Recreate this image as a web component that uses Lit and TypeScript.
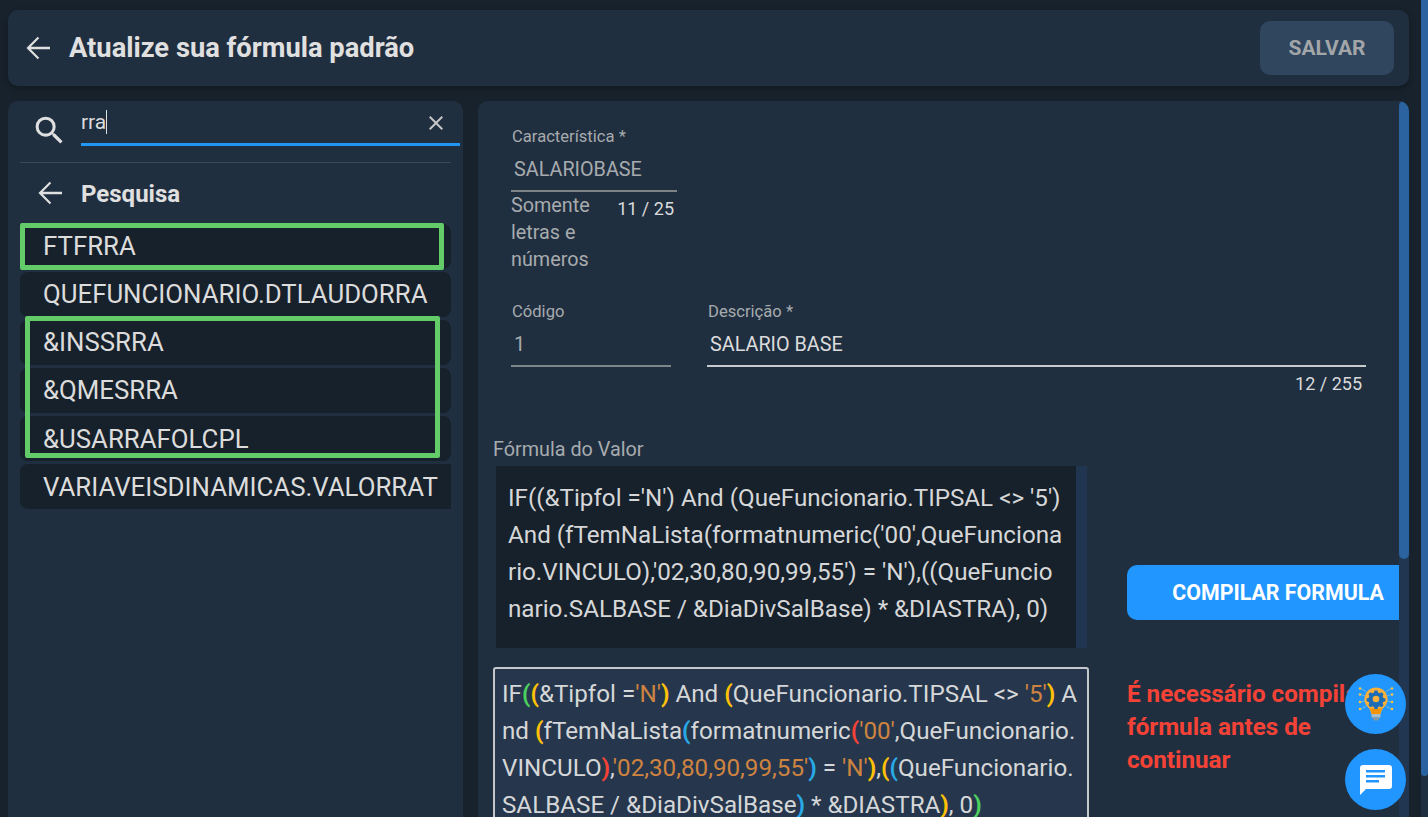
import { LitElement, html, css, svg } from "lit";
import { customElement } from "lit/decorators.js";

const arrow = html`<svg class="arrow" viewBox="0 0 24 24" width="36" height="36" fill="#e0e0e0"><path d="M20 11.100H7.200l5.600-5.600L11.800 4.500 4.300 12l7.500 7.500 1-1-5.600-5.600H20z"/></svg>`;

const bulb = svg`
  <g fill="none" stroke="#6fb7dc" stroke-width="1">
    <path d="M5 2.500l5 3M5 8.500l4 1.500M5 16l4-1M5 23l5-3M35 2.500l-5 3M35 8.500l-4 1.500M35 16l-4-1M35 23l-5-3"/>
  </g>
  <g fill="#f5c242">
    <circle cx="4" cy="2.500" r="1.300"/><circle cx="36" cy="2.500" r="1.300"/>
    <circle cx="4" cy="8.500" r="1.300"/><circle cx="36" cy="8.500" r="1.300"/>
    <circle cx="4" cy="16" r="1.300"/><circle cx="36" cy="16" r="1.300"/>
    <circle cx="4" cy="23" r="1.300"/><circle cx="36" cy="23" r="1.300"/>
  </g>
  <path d="M20 1.500a11.500 11.500 0 0 0-7.500 20.200c1.500 1.500 2.300 3.500 2.700 6.300h9.600c.4-2.800 1.200-4.800 2.700-6.300A11.500 11.500 0 0 0 20 1.500z" fill="#fbb03b"/>
  <path d="M13.500 22.500h13c-1.300 1.500-2 3.300-2.300 5.500h-8.400c-.3-2.200-1-4-2.300-5.500z" fill="#f59300"/>
  <path d="M18.500 4.500h3l.5 2 1.800.8 1.800-1 2 2-1 1.800.8 1.800 2 .5v2.800l-2 .5-.8 1.800 1 1.800-2 2-1.800-1-1.800.8-.5 2h-3l-.5-2-1.800-.8-1.800 1-2-2 1-1.800-.8-1.800-2-.5v-2.800l2-.5.8-1.800-1-1.800 2-2 1.800 1 1.800-.8z" fill="#1c6db5"/>
  <circle cx="20" cy="13" r="3.300" fill="#fbb03b"/>
  <rect x="15.500" y="28" width="9" height="3.500" fill="#a9bcc8"/>
  <path d="M16.500 31.500h7l-1 3h-5z" fill="#7f99ab"/>
`;

@customElement("app-root")
export class AppRoot extends LitElement {
  static styles = css`
    :host {
      display: block;
      width: 1428px;
      height: 817px;
      overflow: hidden;
      position: relative;
      background: #18222c;
      font-family: Roboto, "Liberation Sans", sans-serif;
      color: #e0e0e0;
    }
    .arrow { flex: none; }
    .page {
      width: 1409px;
      padding: 10px 0 0 8px;
      box-sizing: border-box;
      display: flex;
      flex-direction: column;
      gap: 15px;
    }
    .head {
      height: 76px;
      width: 1401px;
      box-sizing: border-box;
      background: #202f40;
      border-radius: 10px;
      box-shadow: 0 3px 6px rgba(0, 0, 0, 0.25);
      display: flex;
      align-items: center;
      padding: 0 15px 0 12px;
    }
    .head h1 {
      font-size: 27.3px;
      font-weight: 700;
      margin: 0 0 0 13px;
      flex: 1;
      line-height: 30px;
    }
    .save {
      width: 134px;
      height: 54px;
      border-radius: 10px;
      background: #30465f;
      color: #a3a6a9;
      font-size: 21px;
      font-weight: 700;
      display: flex;
      align-items: center;
      justify-content: center;
    }
    .cols {
      display: flex;
      gap: 15px;
      height: 716px;
    }
    .left {
      width: 455px;
      background: #202f40;
      border-radius: 10px 10px 0 0;
      position: relative;
      box-sizing: border-box;
      padding: 0 12px;
    }
    .search {
      display: flex;
      height: 61px;
      align-items: flex-start;
      border-bottom: 1px solid #3c4956;
    }
    .search .ic { margin: 11px 0 0 11px; width: 37px; height: 37px; flex: none; }
    .field {
      margin-left: 13px;
      width: 379px;
      height: 45px;
      flex: none;
      border-bottom: 3px solid #2196f3;
      box-sizing: border-box;
      position: relative;
      font-size: 21px;
      display: flex;
      align-items: flex-start;
      padding-top: 9px;
      line-height: 24px;
      justify-content: space-between;
    }
    .caret { border-right: 1px solid #e0e0e0; height: 24px; color: #dcdcdc; }
    .x { margin: 1px 12px 0 0; width: 24px; height: 24px; flex: none; }
    .back {
      display: flex;
      align-items: center;
      height: 60px;
      font-size: 24px;
      font-weight: 700;
      gap: 13px;
      padding-left: 12px;
    }
    .back span { margin-top: 2px; }
    .items {
      display: flex;
      flex-direction: column;
      gap: 3px;
      margin-top: 1px;
    }
    .item {
      height: 45px;
      background: #17212b;
      border-radius: 8px;
      padding-left: 23px;
      font-size: 25.8px;
      line-height: 44px;
      white-space: nowrap;
      overflow: hidden;
      color: #dcdcdc;
    }
    .item.low { line-height: 46px; }
    .item.last { border-radius: 8px 0 0 8px; }
    .mark {
      position: absolute;
      border: 5px solid #63cb68;
      border-radius: 2px;
      box-sizing: border-box;
    }
    .mark.one { left: 12px; top: 122px; width: 424px; height: 47px; }
    .mark.many { left: 17px; top: 215px; width: 415px; height: 142px; }
    .right {
      width: 932px;
      background: #202f40;
      border-radius: 10px 10px 0 0;
      position: relative;
      overflow: hidden;
      box-sizing: border-box;
      padding: 27px 0 0 15px;
    }
    .lab { font-size: 16.6px; line-height: 18px; color: #a7abae; }
    .top { width: 166px; margin-left: 18px; }
    .top .lab { margin-left: 1px; }
    .val { font-size: 19.8px; line-height: 22px; padding-left: 3px; color: #a7abae; margin-top: 13px; height: 33px; box-sizing: border-box; }
    .under { border-bottom: 2px solid #7e8388; }
    .hintrow { display: flex; justify-content: space-between; }
    .hint { font-size: 19.8px; line-height: 27px; color: #a7abae; width: 90px; }
    .count { font-size: 18px; line-height: 18px; color: #d9dadb; margin: 8px 3px 0 0; white-space: nowrap; }
    .row2 { display: flex; margin: 30px 0 0 18px; gap: 36px; }
    .cod { width: 160px; }
    .cod .lab, .desc .lab { margin-left: 1px; }
    .desc { width: 659px; }
    .desc .val { color: #dcdcdc; }
    .desc .under { border-bottom-color: #c9cacc; }
    .c2 { text-align: right; font-size: 18px; line-height: 18px; color: #d9dadb; margin: 8px 4px 0 0; }
    .flabel { font-size: 19.8px; line-height: 22px; color: #a7abae; margin-top: 46px; }
    .fgrid { display: grid; grid-template-columns: 596px 272px; column-gap: 38px; margin-top: 5px; }
    .dark {
      margin-left: 3px;
      width: 591px;
      height: 182px;
      background: #17212b;
      display: flex;
      box-sizing: border-box;
    }
    .dark .txt {
      flex: 1;
      padding: 14px 12px 0 12px;
      font-size: 24.2px;
      line-height: 37px;
      word-break: break-all;
      color: #d6d7d8;
    }
    .dark .sb { width: 11px; background: #1f3550; flex: none; }
    .btnwrap { display: flex; align-items: center; height: 182px; }
    .btn {
      width: 272px;
      height: 55px;
      margin-top: 70px;
      box-sizing: border-box;
      background: #2196ff;
      color: #fff;
      font-size: 21.4px;
      font-weight: 700;
      border-radius: 10px 0 0 10px;
      display: flex;
      align-items: center;
      justify-content: flex-end;
      padding-right: 15px;
      white-space: nowrap;
    }
    .edit {
      margin-top: 19px;
      width: 596px;
      height: 200px;
      box-sizing: border-box;
      border: 2px solid #c5c8cb;
      border-radius: 3px;
      background: #26374d;
      padding: 7px 7px;
      font-size: 24.2px;
      line-height: 37px;
      word-break: break-all;
      color: #d6d7d8;
    }
    .y { color: #ffc107; font-weight: 700; }
    .g { color: #4ccf5f; font-weight: 700; }
    .b { color: #29a9e6; font-weight: 700; }
    .r { color: #f44336; font-weight: 700; }
    .s { color: #ce8340; }
    .err {
      margin-top: 30px;
      font-size: 24.2px;
      font-weight: 700;
      line-height: 33px;
      color: #f44336;
      width: 272px;
      max-height: 100px;
    }
    .sbi {
      position: absolute;
      right: 0;
      top: 0;
      width: 10px;
      height: 100%;
      background: #213650;
    }
    .sbi i { display: block; height: 458px; background: #2a639f; border-radius: 5px; }
    .sbo { position: absolute; left: 1421px; top: 0; width: 7px; height: 817px; background: #202f40; }
    .sbo i { display: block; height: 776px; background: #2a639f; border-radius: 0 0 4px 4px; }
    .fab {
      position: absolute;
      left: 1345px;
      width: 61px;
      height: 60px;
      border-radius: 50%;
      background: #2196ff;
      display: flex;
      align-items: center;
      justify-content: center;
    }
    .fab.one { top: 674px; }
    .fab.two { top: 749px; height: 61px; }
  `;

  render() {
    const rows = ["FTFRRA", "QUEFUNCIONARIO.DTLAUDORRA", "&INSSRRA", "&QMESRRA"];
    return html`
      <div class="page">
        <div class="head">
          ${arrow}
          <h1>Atualize sua fórmula padrão</h1>
          <div class="save">SALVAR</div>
        </div>
        <div class="cols">
          <div class="left">
            <div class="search">
              <svg class="ic" viewBox="0 0 24 24" fill="#e0e0e0"><path d="M15.500 14h-.79l-.28-.27A6.471 6.471 0 0 0 16 9.500 6.500 6.500 0 1 0 9.500 16c1.610 0 3.090-.59 4.230-1.570l.27.28v.79l5 4.990L20.490 19l-4.990-5zm-6 0C7.010 14 5 11.990 5 9.500S7.010 5 9.500 5 14 7.010 14 9.500 11.990 14 9.500 14z"/></svg>
              <div class="field">
                <span class="caret">rra</span>
                <svg class="x" viewBox="0 0 24 24" fill="#c4c6c8"><path d="M19 6.410L17.590 5 12 10.590 6.410 5 5 6.410 10.590 12 5 17.590 6.410 19 12 13.410 17.590 19 19 17.590 13.410 12z"/></svg>
              </div>
            </div>
            <div class="back">${arrow}<span>Pesquisa</span></div>
            <div class="items">
              ${rows.map((r) => html`<div class="item">${r}</div>`)}
              <div class="item low">&amp;USARRAFOLCPL</div>
              <div class="item last low">VARIAVEISDINAMICAS.VALORRAT</div>
            </div>
            <div class="mark one"></div>
            <div class="mark many"></div>
          </div>
          <div class="right">
            <div class="top">
              <div class="lab">Característica *</div>
              <div class="val under">SALARIOBASE</div>
              <div class="hintrow">
                <div class="hint">Somente letras e números</div>
                <div class="count">11 / 25</div>
              </div>
            </div>
            <div class="row2">
              <div class="cod">
                <div class="lab">Código</div>
                <div class="val under">1</div>
              </div>
              <div class="desc">
                <div class="lab">Descrição *</div>
                <div class="val under">SALARIO BASE</div>
                <div class="c2">12 / 255</div>
              </div>
            </div>
            <div class="flabel">Fórmula do Valor</div>
            <div class="fgrid">
              <div class="dark">
                <div class="txt">IF((&amp;Tipfol ='N') And (QueFuncionario.TIPSAL &lt;&gt; '5') And (fTemNaLista(formatnumeric('00',QueFuncionario.VINCULO),'02,30,80,90,99,55') = 'N'),((QueFuncionario.SALBASE / &amp;DiaDivSalBase) * &amp;DIASTRA), 0)</div>
                <div class="sb"></div>
              </div>
              <div class="btnwrap"><div class="btn">COMPILAR FORMULA</div></div>
              <div class="edit">IF<span class="g">(</span><span class="y">(</span>&amp;Tipfol =<span class="s">'N'</span><span class="y">)</span> And <span class="y">(</span>QueFuncionario.TIPSAL &lt;&gt; <span class="s">'5'</span><span class="y">)</span> And <span class="y">(</span>fTemNaLista<span class="b">(</span>formatnumeric<span class="r">(</span><span class="s">'00'</span>,QueFuncionario.VINCULO<span class="r">)</span>,<span class="s">'02,30,80,90,99,55'</span><span class="b">)</span> = <span class="s">'N'</span><span class="y">)</span>,<span class="y">(</span><span class="b">(</span>QueFuncionario.SALBASE / &amp;DiaDivSalBase<span class="b">)</span> * &amp;DIASTRA<span class="y">)</span>, 0<span class="g">)</span></div>
              <div class="err">É necessário compilar a fórmula antes de continuar</div>
            </div>
            <div class="sbi"><i></i></div>
          </div>
        </div>
      </div>
      <div class="sbo"><i></i></div>
      <div class="fab one"><svg width="40" height="36" viewBox="0 0 40 36">${bulb}</svg></div>
      <div class="fab two"><svg width="36" height="36" viewBox="0 0 36 36"><path d="M5 3h26a3 3 0 0 1 3 3v18a3 3 0 0 1-3 3H8l-6 6V6a3 3 0 0 1 3-3z" fill="#fff"/><path d="M8 8h19v2.600H8zM8 13h19v2.600H8zM8 18h13v2.600H8z" fill="#2196ff"/></svg></div>
    `;
  }
}
